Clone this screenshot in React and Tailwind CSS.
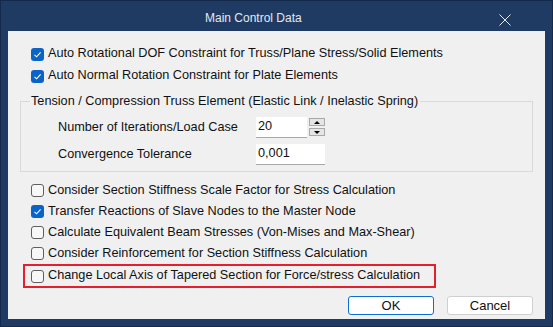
import React from "react";

function CheckBox({ checked }) {
  if (checked) {
    return (
      <div className="w-[13px] h-[13px] rounded-[3px] bg-[#0a64c8] flex items-center justify-center shrink-0">
        <svg width="9" height="9" viewBox="0 0 9 9">
          <path d="M1.5 4.8 L3.6 6.8 L7.6 2.4" fill="none" stroke="#fff" strokeWidth="1.1" />
        </svg>
      </div>
    );
  }
  return <div className="w-[13px] h-[13px] rounded-[3px] border border-[#5f5f5f] bg-[#f7f7f7] shrink-0" />;
}

function Row({ checked, label, h = "h-[22px]" }) {
  return (
    <div className={`flex items-center ${h} pl-[23px]`}>
      <CheckBox checked={checked} />
      <span className="ml-[4px] whitespace-nowrap">{label}</span>
    </div>
  );
}

export default function App() {
  return (
    <div
      className="w-[553px] h-[327px] bg-[#1f3b64] border border-[#152a4a] flex flex-col text-[12.7px] text-[#111]"
      style={{ fontFamily: '"Liberation Sans", Arial, sans-serif' }}
    >
      <div className="h-[30px] relative flex items-center shrink-0 pl-[204px]">
        <span className="text-[#e2e8f0] text-[12px] mt-[3px] whitespace-nowrap">Main Control Data</span>
        <svg className="absolute left-[498px] top-[13px]" width="12" height="12" viewBox="0 0 12 12">
          <path d="M0.5 0.5 L11.5 11.5 M11.5 0.5 L0.5 11.5" stroke="#e6ebf2" strokeWidth="1" />
        </svg>
      </div>
      <div className="mx-[7px] mb-[7px] flex-1 bg-[#f0f0f0] flex flex-col pt-[12px]">
        <Row checked label="Auto Rotational DOF Constraint for Truss/Plane Stress/Solid Elements" />
        <Row checked label="Auto Normal Rotation Constraint for Plate Elements" />
        <div className="relative ml-[12px] w-[513px] h-[71px] mt-[14px] border border-[#d9d9d9] pl-[37px] pt-[15px]">
          <span className="absolute left-[9px] top-[-9px] bg-[#f0f0f0] pl-[1px] pr-[2px] leading-[16px] whitespace-nowrap">
            Tension / Compression Truss Element (Elastic Link / Inelastic Spring)
          </span>
          <div className="flex items-center h-[21px]">
            <span className="w-[198px] whitespace-nowrap">Number of Iterations/Load Case</span>
            <div className="w-[51px] h-[21px] bg-white border-b border-[#a8a8a8] flex items-center pl-[2px]">20</div>
            <div className="ml-[2px] w-[16px] h-[21px] flex flex-col gap-[2px] pt-[1px]">
              <div className="h-[8px] bg-[#e5e5e5] border border-[#a9a9a9] flex items-center justify-center">
                <svg width="6" height="3" viewBox="0 0 6 3"><path d="M0 3 L3 0 L6 3 Z" fill="#000" /></svg>
              </div>
              <div className="h-[8px] bg-[#e5e5e5] border border-[#a9a9a9] flex items-center justify-center">
                <svg width="6" height="3" viewBox="0 0 6 3"><path d="M0 0 L3 3 L6 0 Z" fill="#000" /></svg>
              </div>
            </div>
          </div>
          <div className="flex items-center h-[21px] mt-[6px]">
            <span className="w-[198px] whitespace-nowrap">Convergence Tolerance</span>
            <div className="w-[69px] h-[21px] bg-white border-b border-[#a8a8a8] flex items-center pl-[2px]">0,001</div>
          </div>
        </div>
        <div className="mt-[8px]">
          <Row label="Consider Section Stiffness Scale Factor for Stress Calculation" h="h-[21px]" />
          <Row checked label="Transfer Reactions of Slave Nodes to the Master Node" h="h-[21px]" />
          <Row label="Calculate Equivalent Beam Stresses (Von-Mises and Max-Shear)" h="h-[21px]" />
          <Row label="Consider Reinforcement for Section Stiffness Calculation" h="h-[21px]" />
        </div>
        <div className="ml-[15px] w-[413px] h-[24px] border-2 border-[#e5202e] flex items-center pl-[6px]">
          <CheckBox />
          <span className="ml-[4px] whitespace-nowrap">Change Local Axis of Tapered Section for Force/stress Calculation</span>
        </div>
        <div className="flex justify-end gap-[13px] pr-[12px] mt-[8px]">
          <button className="w-[86px] h-[19px] rounded-[3px] border border-[#0a6fd0] bg-white flex items-center justify-center leading-none text-[13px]">OK</button>
          <button className="w-[86px] h-[19px] rounded-[3px] border border-[#cfcfcf] bg-white flex items-center justify-center leading-none text-[13px]">Cancel</button>
        </div>
      </div>
    </div>
  );
}
